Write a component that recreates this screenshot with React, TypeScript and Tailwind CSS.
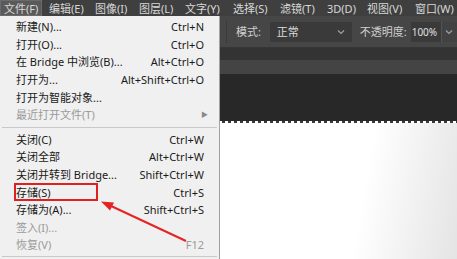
import React from 'react';

type Item = { label: string; shortcut?: string; disabled?: boolean; sub?: boolean; sepBefore?: boolean; boxed?: boolean };

const menuItems: Item[] = [
  { label: '新建(N)...', shortcut: 'Ctrl+N' },
  { label: '打开(O)...', shortcut: 'Ctrl+O' },
  { label: '在 Bridge 中浏览(B)...', shortcut: 'Alt+Ctrl+O' },
  { label: '打开为...', shortcut: 'Alt+Shift+Ctrl+O' },
  { label: '打开为智能对象...' },
  { label: '最近打开文件(T)', disabled: true, sub: true },
  { label: '关闭(C)', shortcut: 'Ctrl+W', sepBefore: true },
  { label: '关闭全部', shortcut: 'Alt+Ctrl+W' },
  { label: '关闭并转到 Bridge...', shortcut: 'Shift+Ctrl+W' },
  { label: '存储(S)', shortcut: 'Ctrl+S', boxed: true },
  { label: '存储为(A)...', shortcut: 'Shift+Ctrl+S' },
  { label: '签入(I)...', disabled: true },
  { label: '恢复(V)', shortcut: 'F12', disabled: true },
];

const topMenus: [string, string][] = [
  ['文件(F)', 'w-[45px]'],
  ['编辑(E)', 'w-[46px]'],
  ['图像(I)', 'w-[44px]'],
  ['图层(L)', 'w-[46px]'],
  ['文字(Y)', 'w-[48px]'],
  ['选择(S)', 'w-[47px]'],
  ['滤镜(T)', 'w-[47px]'],
  ['3D(D)', 'w-[40px]'],
  ['视图(V)', 'w-[48px]'],
  ['窗口(W)', 'w-[46px]'],
];

const Chevron = () => (
  <svg width="8" height="6" viewBox="0 0 8 6" className="text-gray-400">
    <path d="M1 1.5 L4 4.5 L7 1.5" fill="none" stroke="currentColor" strokeWidth="1.2" />
  </svg>
);

const App: React.FC = () => {
  return (
    <div
      className="relative w-[457px] h-[259px] overflow-hidden bg-[#282828] text-[11px] leading-none whitespace-nowrap"
      style={{ fontFamily: '"Noto Sans", "Noto Sans CJK SC", sans-serif' }}
    >
      {/* menu bar */}
      <div className="h-[16px] bg-[#3f3f3f] flex items-center text-[#d8d8d8] pl-[4px]">
        {topMenus.map(([m, w], i) => (
          <div key={m} className={`shrink-0 h-full flex items-center ${w}`}>
            {i === 0 ? (
              <span className="ml-[-4px] h-full w-[42px] pl-[3px] flex items-center bg-[#5a5a5a] border border-[#6a6a6a]">{m}</span>
            ) : (
              m
            )}
          </div>
        ))}
      </div>

      {/* options bar */}
      <div className="h-[32px] bg-[#464646] flex items-center pl-[226px] border-b border-[#363636]">
        <div className="h-[22px] w-px bg-[#3a3a3a] mr-[9px]" />
        <span className="text-[#cfcfcf]">模式:</span>
        <div className="ml-[9px] w-[89px] h-[20px] bg-[#3a3a3a] flex items-center justify-between px-[7px] text-[#dcdcdc]">
          <span>正常</span>
          <Chevron />
        </div>
        <span className="ml-[8px] text-[#cfcfcf]">不透明度:</span>
        <div className="ml-[4px] w-[33px] h-[20px] bg-[#3a3a3a] flex items-center pl-[1px] text-[#e0e0e0] text-[10px]">
          100%
        </div>
        <div className="w-[18px] h-[20px] bg-[#424242] border-l border-[#555] flex items-center justify-center">
          <Chevron />
        </div>
      </div>

      {/* tab strip */}
      <div className="h-[12px] bg-[#333333]" />
      <div className="h-[14px] bg-[#444444]" />

      {/* dark canvas */}
      <div className="h-[47px] bg-[#282828]" />

      {/* document */}
      <div className="relative h-[138px] bg-[linear-gradient(100deg,#ffffff_0%,#ffffff_78%,#e4e4e4_100%)]">
        <div className="absolute top-0 left-0 right-0 h-[2px] bg-[repeating-linear-gradient(90deg,#3a3a3a_0px,#3a3a3a_3px,#ffffff_3px,#ffffff_6px)]" />
      </div>

      {/* file dropdown */}
      <div className="absolute left-0 top-[16px] w-[220px] h-[250px] bg-[#f0f0f0] border-r border-[#a0a0a0] text-[#1a1a1a] pt-[2px]">
        {menuItems.map((it) => (
          <React.Fragment key={it.label}>
            {it.sepBefore && <div className="mx-[2px] my-[3px] h-px bg-[#c8c8c8]" />}
            <div className={`relative h-[17.6px] flex items-center pl-[16px] pr-[15px] ${it.disabled ? 'text-[#9a9a9a]' : ''}`}>
              <span>{it.label}</span>
              <span className="ml-auto">{it.shortcut}</span>
              {it.sub && <span className="ml-auto mr-[-4px] text-[7px] text-[#8a8a8a]">▶</span>}
              {it.boxed && (
                <div className="absolute left-[14px] top-[0px] w-[84px] h-[18px] border-2 border-[#e02020]" />
              )}
            </div>
          </React.Fragment>
        ))}
        <div className="mx-[2px] mt-[2px] h-px bg-[#c8c8c8]" />
      </div>

      {/* red arrow annotation */}
      <svg className="absolute left-0 top-0" width="457" height="259">
        <line x1="186" y1="241" x2="110" y2="205.5" stroke="#e42424" strokeWidth="2" />
        <polygon points="101,201.5 114,202.5 110,210.5" fill="#e42424" />
      </svg>
    </div>
  );
};

export default App;
